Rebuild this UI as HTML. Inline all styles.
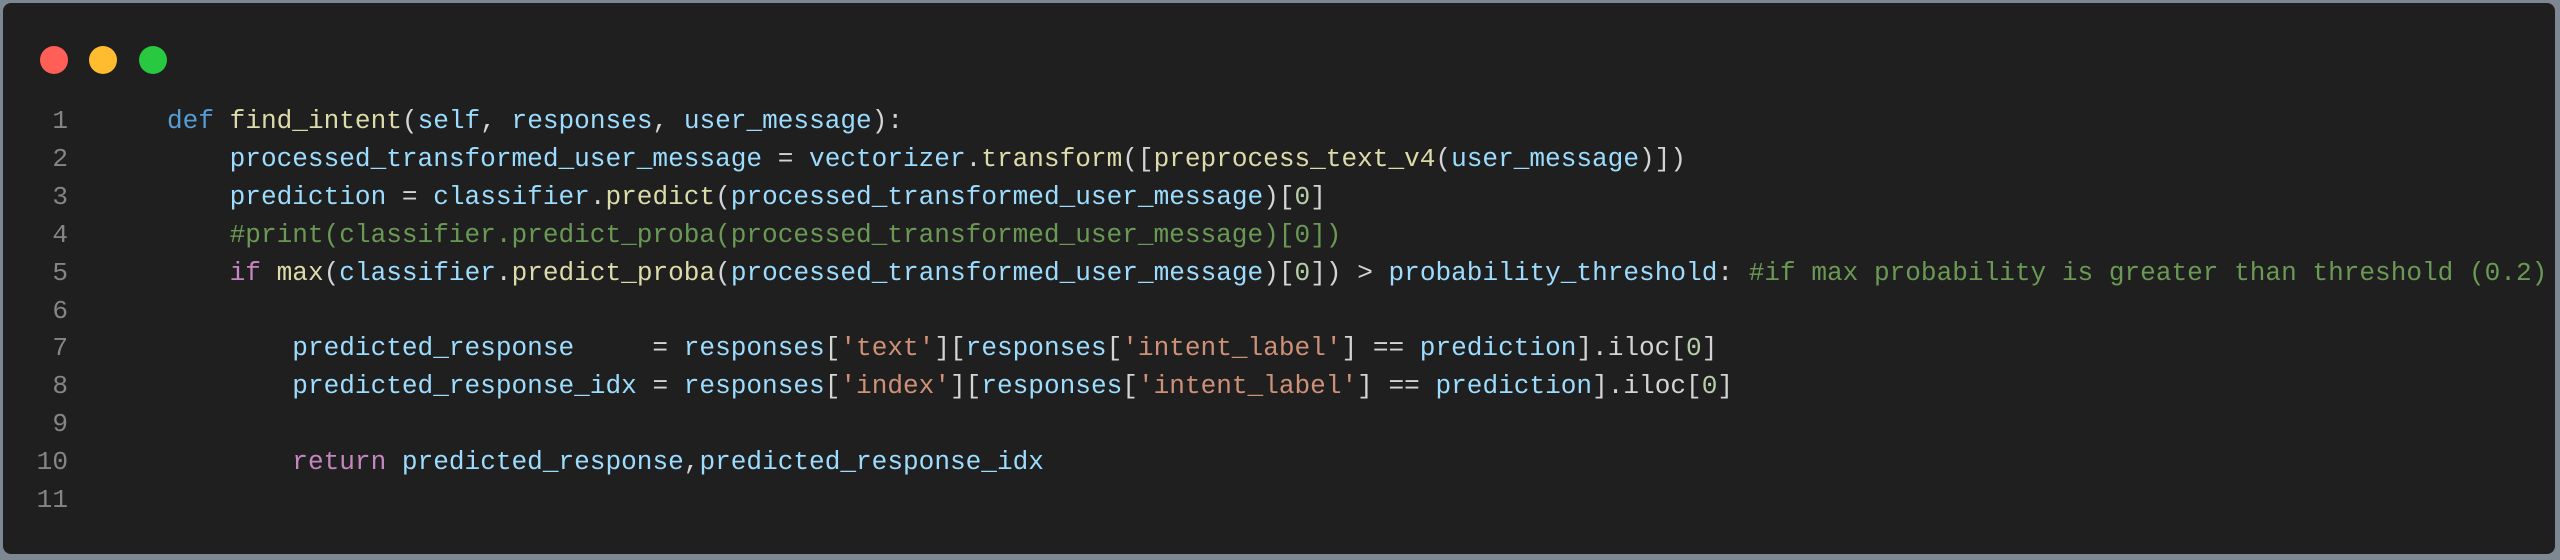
<!DOCTYPE html>
<html><head><meta charset="utf-8"><style>
html,body{margin:0;padding:0;}
body{width:2560px;height:560px;background:#7d8893;position:relative;overflow:hidden;}
.panel{position:absolute;left:3px;top:3px;width:2552px;height:551px;background:#1f1f1f;border-radius:8px;}
.dot{position:absolute;top:43px;width:28px;height:28px;border-radius:50%;}
.code{position:absolute;left:0;top:100px;font-family:"Liberation Mono",monospace;font-size:26.1px;line-height:37.9px;color:#d4d4d4;white-space:pre;}
.ln{position:absolute;left:0;width:65px;text-align:right;color:#858585;}
.l{position:absolute;left:164px;}
.k{color:#569cd6}.f{color:#dcdcaa}.v{color:#9cdcfe}.c{color:#6a9955}.s{color:#ce9178}.n{color:#b5cea8}.p{color:#c586c0}
</style></head><body>
<div class="panel">
<div class="dot" style="left:37px;background:#ff5f57"></div>
<div class="dot" style="left:86px;background:#febc2e"></div>
<div class="dot" style="left:136px;background:#28c840"></div>
<div class="code">
<div class="ln" style="top:0">1</div><div class="ln" style="top:37.9px">2</div><div class="ln" style="top:75.8px">3</div><div class="ln" style="top:113.7px">4</div><div class="ln" style="top:151.6px">5</div><div class="ln" style="top:189.5px">6</div><div class="ln" style="top:227.4px">7</div><div class="ln" style="top:265.3px">8</div><div class="ln" style="top:303.2px">9</div><div class="ln" style="top:341.1px">10</div><div class="ln" style="top:379px">11</div>
<div class="l" style="top:0"><span class="k">def</span> <span class="f">find_intent</span>(<span class="v">self</span>, <span class="v">responses</span>, <span class="v">user_message</span>):</div>
<div class="l" style="top:37.9px">    <span class="v">processed_transformed_user_message</span> = <span class="v">vectorizer</span>.<span class="f">transform</span>([<span class="f">preprocess_text_v4</span>(<span class="v">user_message</span>)])</div>
<div class="l" style="top:75.8px">    <span class="v">prediction</span> = <span class="v">classifier</span>.<span class="f">predict</span>(<span class="v">processed_transformed_user_message</span>)[<span class="n">0</span>]</div>
<div class="l" style="top:113.7px">    <span class="c">#print(classifier.predict_proba(processed_transformed_user_message)[0])</span></div>
<div class="l" style="top:151.6px">    <span class="p">if</span> <span class="f">max</span>(<span class="v">classifier</span>.<span class="f">predict_proba</span>(<span class="v">processed_transformed_user_message</span>)[<span class="n">0</span>]) &gt; <span class="v">probability_threshold</span>: <span class="c">#if max probability is greater than threshold (0.2)</span></div>
<div class="l" style="top:227.4px">        <span class="v">predicted_response</span>     = <span class="v">responses</span>[<span class="s">'text'</span>][<span class="v">responses</span>[<span class="s">'intent_label'</span>] == <span class="v">prediction</span>].iloc[<span class="n">0</span>]</div>
<div class="l" style="top:265.3px">        <span class="v">predicted_response_idx</span> = <span class="v">responses</span>[<span class="s">'index'</span>][<span class="v">responses</span>[<span class="s">'intent_label'</span>] == <span class="v">prediction</span>].iloc[<span class="n">0</span>]</div>
<div class="l" style="top:341.1px">        <span class="p">return</span> <span class="v">predicted_response</span>,<span class="v">predicted_response_idx</span></div>
</div>
</div>
</body></html>
